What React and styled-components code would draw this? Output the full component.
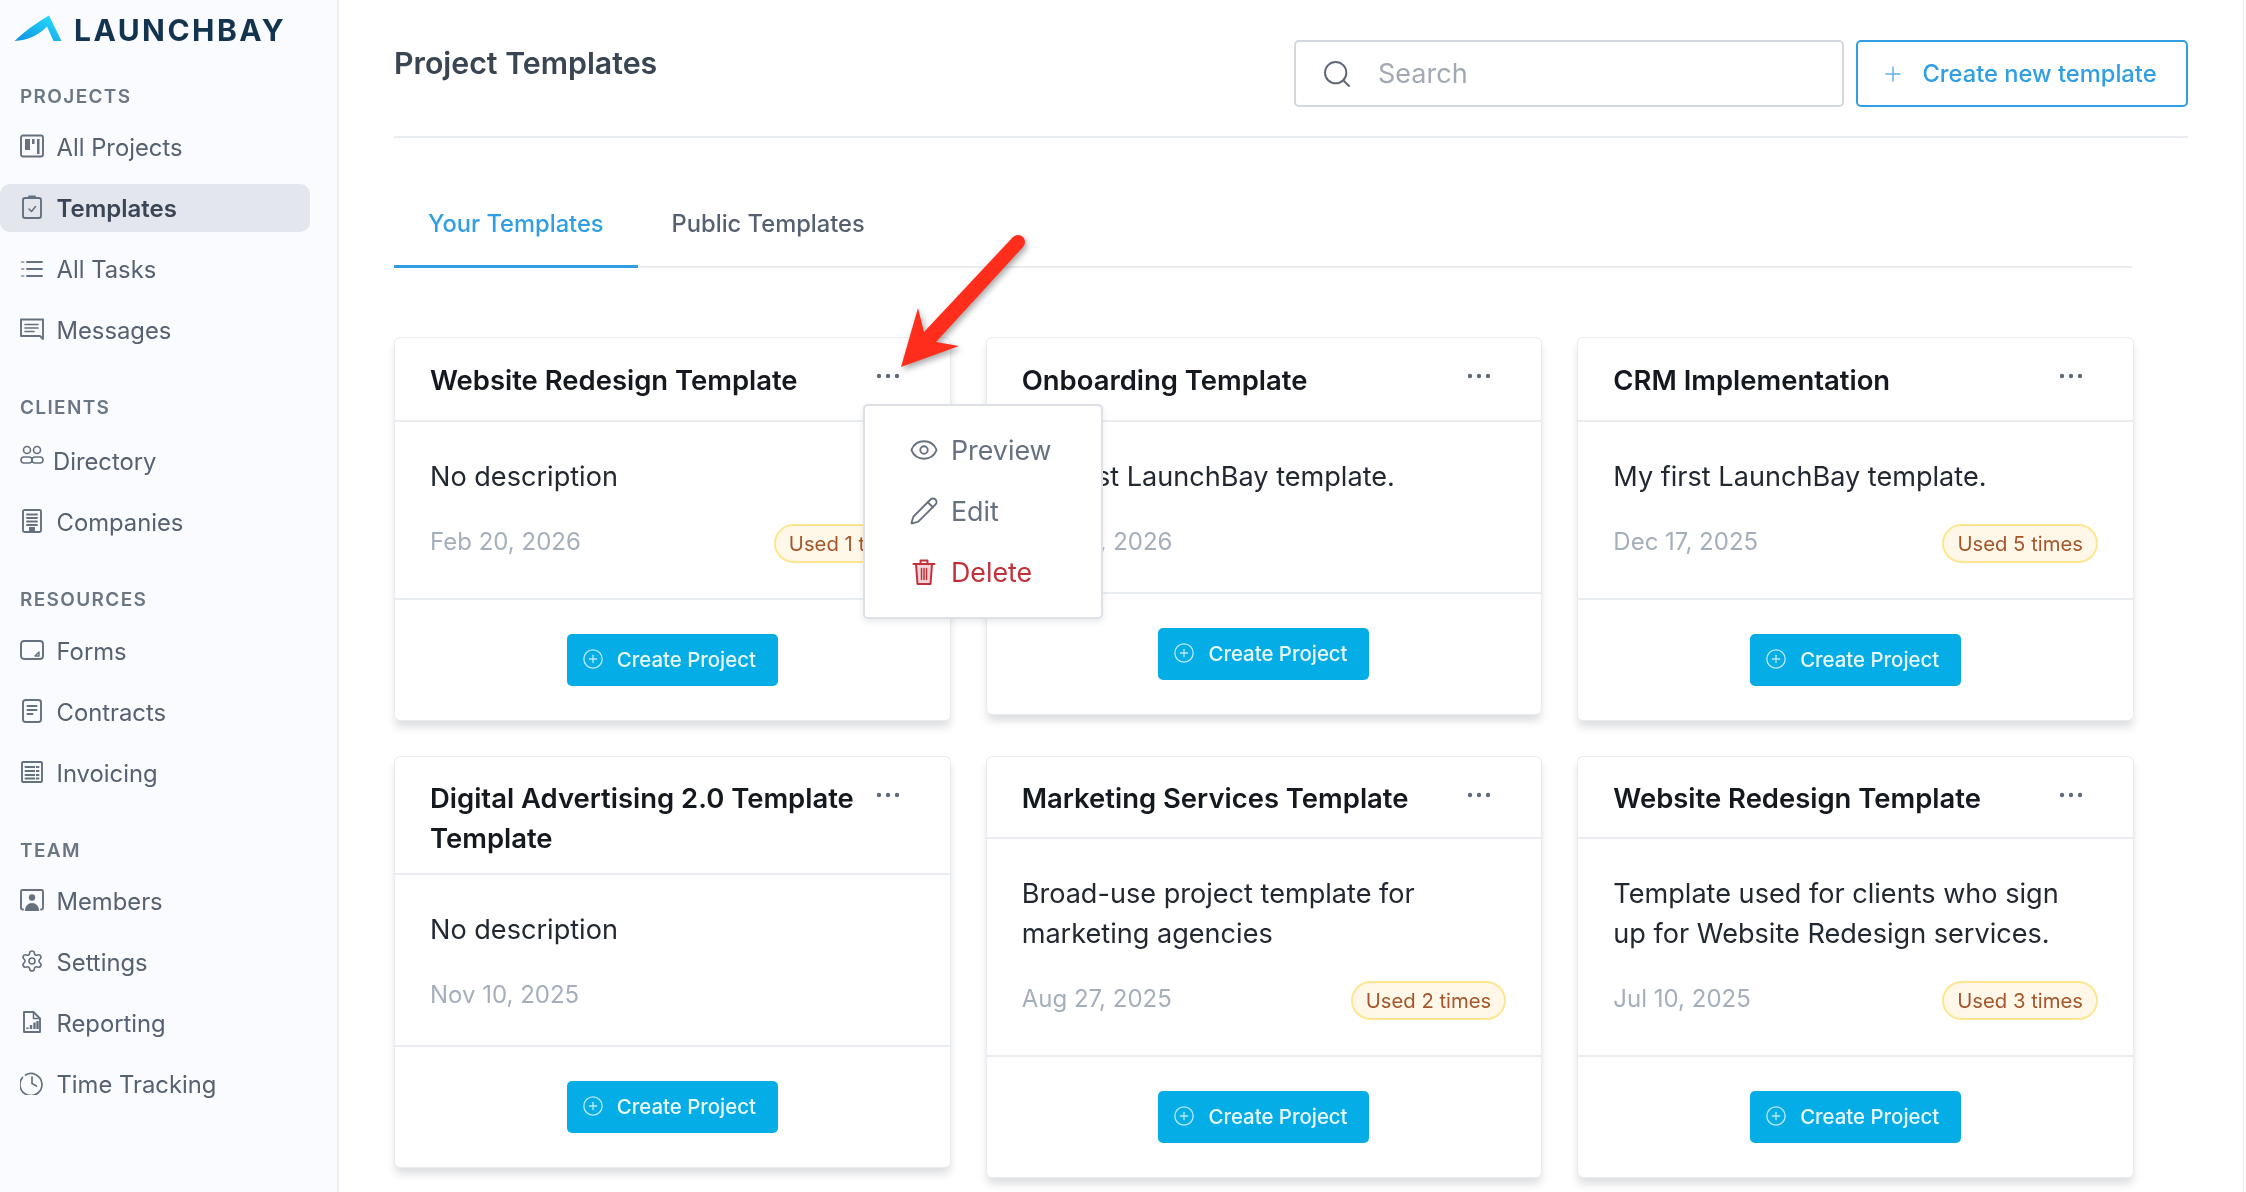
import React from "react";
import styled, { createGlobalStyle } from "styled-components";
import { Eye, Pencil, Search, Plus, CirclePlus, Settings } from "lucide-react";

const Global = createGlobalStyle`
  html, body { margin: 0; padding: 0; background: #fff; }
  body { font-family: Inter, "Liberation Sans", sans-serif; overflow: hidden; }
  * { box-sizing: border-box; }
`;

const Page = styled.div`
  position: relative;
  display: flex;
  width: 2246px;
  height: 1192px;
  overflow: hidden;
`;

const Sidebar = styled.aside`
  flex: 0 0 339px;
  height: 100%;
  background: #fafbfe;
  border-right: 2px solid #eef0f4;
  filter: blur(0.55px);
`;

const LogoRow = styled.div`
  display: flex;
  align-items: flex-start;
  height: 81px;
  padding: 10px 0 0 14px;
  gap: 12px;
`;

const LogoText = styled.span`
  font-size: 30px;
  line-height: 40px;
  font-weight: 700;
  letter-spacing: 2.45px;
  color: #12344f;
`;

const Section = styled.section`
  margin-bottom: 38px;
`;

const SectionLabel = styled.div`
  height: 30px;
  line-height: 32px;
  padding-left: 20px;
  margin-bottom: ${(p) => p.$mb}px;
  font-size: 19px;
  font-weight: 600;
  letter-spacing: 1.35px;
  color: #6b7685;
`;

const NavList = styled.div`
  display: flex;
  flex-direction: column;
  gap: 13px;
`;

const NavItem = styled.div`
  display: flex;
  align-items: center;
  gap: ${(p) => p.$gap || 12.5}px;
  width: 310px;
  height: 48px;
  padding-left: 20px;
  border-radius: 10px;
  font-size: ${(p) => (p.$active ? 24 : 23.8)}px;
  font-weight: ${(p) => (p.$active ? 600 : 400)};
  color: ${(p) => (p.$active ? "#3a4656" : "#566172")};
  background: ${(p) => (p.$active ? "#e3e6ec" : "transparent")};
`;

const NavIcon = styled.svg`
  flex: 0 0 24px;
  width: 24px;
  height: 24px;
  color: #657080;
  margin-top: ${(p) => -(p.$lift ?? 2)}px;
`;

const Main = styled.main`
  flex: 1;
  height: 100%;
  margin-right: 2px;
  padding: 40px 55px 0;
  border-right: 1px solid #e8eaee;
  filter: blur(0.55px);
`;

const TopBar = styled.header`
  display: flex;
  align-items: flex-start;
  height: 98px;
  border-bottom: 2px solid #e9ecf0;
`;

const PageTitle = styled.h1`
  flex: 1;
  margin: 0;
  font-size: 30.3px;
  line-height: 46px;
  font-weight: 600;
  color: #3a4553;
`;

const SearchBox = styled.div`
  display: flex;
  align-items: center;
  gap: 25px;
  width: 550px;
  height: 67px;
  padding-left: 25px;
  border: 2px solid #d3d7de;
  border-radius: 5px;
  font-size: 27px;
  color: #a2a9b4;
  svg { color: #5f6977; flex: none; }
`;

const CreateButton = styled.button`
  display: flex;
  align-items: center;
  gap: 17.5px;
  width: 332px;
  height: 67px;
  margin-left: 12px;
  padding: 0 0 0 23px;
  border: 2px solid #2f9ee3;
  border-radius: 5px;
  background: #fff;
  font: 500 23.7px Inter, sans-serif;
  color: #2f9ee3;
  svg { color: #62b3e8; flex: none; }
`;

const Content = styled.div`
  padding-right: 56px;
`;

const Tabs = styled.nav`
  display: flex;
  margin-top: 52px;
  border-bottom: 2px solid #e9ecf0;
`;

const Tab = styled.div`
  height: 78px;
  padding: 17px 34px 0;
  margin-bottom: -2px;
  font-size: 23.7px;
  line-height: 34px;
  font-weight: 500;
  color: ${(p) => (p.$active ? "#2f9ee3" : "#556070")};
  border-bottom: 3px solid ${(p) => (p.$active ? "#2f9ee3" : "transparent")};
`;

const CardGrid = styled.div`
  display: grid;
  grid-template-columns: repeat(3, 1fr);
  gap: 37px;
  align-items: start;
  margin: 70px -1px 0 1px;
`;

const Card = styled.article`
  position: relative;
  background: #fff;
  border-radius: 5px;
  box-shadow: 0 0 0 1px #e9ebf0, 0 7px 9px rgba(40, 50, 70, 0.16);
`;

const CardHeader = styled.div`
  display: flex;
  align-items: flex-start;
  justify-content: space-between;
  height: ${(p) => p.$height}px;
  padding: ${(p) => p.$pt}px 50px 0 35px;
  border-bottom: 2px solid #e9ecf0;
`;

const CardTitle = styled.h2`
  margin: 0;
  max-width: 430px;
  font-size: 27.45px;
  line-height: 40px;
  font-weight: 600;
  color: #14181f;
`;

const Dots = styled.svg`
  flex: none;
  width: 24px;
  height: 6px;
  margin-top: ${(p) => 35 - p.$pt}px;
  color: #5f6b7a;
`;

const CardBody = styled.div`
  padding: 35px 35px 36px;
`;

const Description = styled.p`
  margin: 0 0 28px;
  max-width: 470px;
  font-size: 27.1px;
  line-height: 40px;
  color: #222831;
`;

const MetaRow = styled.div`
  display: flex;
  align-items: flex-start;
  justify-content: space-between;
`;

const DateText = styled.span`
  font-size: 24px;
  line-height: 33px;
  color: #a5afbc;
`;

const Badge = styled.span`
  height: 39px;
  margin-top: -1px;
  margin-bottom: 1px;
  padding: 0 13px;
  line-height: 36px;
  font-size: 20.3px;
  color: #a5562c;
  background: #fff8e8;
  border: 2px solid #fde68f;
  border-radius: 20px;
`;

const CardFooter = styled.div`
  display: flex;
  justify-content: center;
  padding: 34px 0 34px;
  border-top: 2px solid #e9ecf0;
  margin-top: -2px;
`;

const ProjectButton = styled.button`
  display: flex;
  align-items: center;
  gap: 13px;
  height: 52px;
  width: 211px;
  padding: 0 0 2px 15px;
  border: 0;
  border-radius: 5px;
  background: #05ade6;
  font: 500 20.4px Inter, sans-serif;
  color: #eaf9ff;
  svg { flex: none; opacity: 0.8; }
`;

const Menu = styled.div`
  position: absolute;
  z-index: 5;
  left: 468px;
  top: 66px;
  width: 240px;
  height: 215px;
  padding: 13px 0 0 44px;
  background: #fff;
  border: 2px solid #dde0e6;
  border-radius: 5px;
  box-shadow: 0 3px 6px rgba(40, 50, 70, 0.1);
`;

const MenuItem = styled.div`
  display: flex;
  align-items: center;
  gap: 12px;
  height: 61px;
  font-size: 26.8px;
  color: ${(p) => (p.$danger ? "#c2303a" : "#667180")};
  svg { flex: none; }
`;

const Arrow = styled.svg`
  position: absolute;
  z-index: 10;
  left: 895px;
  top: 230px;
  width: 135px;
  height: 145px;
  overflow: visible;
  filter: drop-shadow(2px 3px 3px rgba(0, 0, 0, 0.35));
`;

const Ic = ({ lift, children }) => (
  <NavIcon $lift={lift} viewBox="0 0 24 24" fill="none" stroke="currentColor" strokeWidth="1.9" strokeLinecap="round" strokeLinejoin="round">
    {children}
  </NavIcon>
);

const icons = {
  projects: (
    <Ic>
      <rect x="1" y="1.5" width="22" height="21" rx="2" />
      <path d="M5 5v11h5V5zM12 5v5h2.5V5zM17 5v15h2.5V5z" fill="currentColor" stroke="none" />
    </Ic>
  ),
  templates: (
    <Ic>
      <rect x="3" y="3" width="18" height="20" rx="2" />
      <rect x="8" y="0.5" width="8" height="3.5" rx="1" fill="currentColor" stroke="none" />
      <path d="M9 14l2.5 2.5L15.5 11.5" strokeWidth="1.5" />
    </Ic>
  ),
  tasks: (
    <Ic lift={0}>
      <path d="M7 5h15M7 12h15M7 19h15" />
      <path d="M2 5h1.5M2 12h1.5M2 19h1.5" strokeWidth="2.2" opacity="0.6" />
    </Ic>
  ),
  messages: (
    <Ic>
      <path d="M1 2.5h22v19.5l-3-3H1z" />
      <path d="M5 7.5h13M5 11h13M5 14.5h9" strokeWidth="1.6" />
    </Ic>
  ),
  directory: (
    <Ic lift={10}>
      <circle cx="7" cy="6" r="3.5" strokeWidth="1.6" />
      <circle cx="17" cy="6" r="3.5" strokeWidth="1.6" />
      <rect x="1" y="13" width="11" height="6" rx="3" strokeWidth="1.6" />
      <rect x="12" y="13" width="11" height="6" rx="3" strokeWidth="1.6" />
    </Ic>
  ),
  companies: (
    <Ic>
      <rect x="3" y="1" width="18" height="22" rx="1.5" />
      <path d="M7 5.5h10M7 9h10M7 12.5h10M7 16h10" strokeWidth="1.8" strokeDasharray="2.5 1.3" />
      <rect x="9" y="18" width="6" height="5" fill="currentColor" stroke="none" />
    </Ic>
  ),
  forms: (
    <Ic lift={3}>
      <rect x="1" y="3" width="22" height="18" rx="3" />
      <path d="M15 18l4-4v4z" strokeWidth="1.4" />
    </Ic>
  ),
  contracts: (
    <Ic>
      <rect x="3" y="1" width="18" height="22" rx="2.5" />
      <path d="M7.5 7h9M7.5 11h9M7.5 15h5" strokeWidth="2" />
    </Ic>
  ),
  invoicing: (
    <Ic>
      <rect x="2" y="2" width="20" height="20" rx="1" />
      <path d="M5.5 7h13M5.5 11h13M5.5 15h13M5.5 18.5h13" strokeWidth="2" />
      <path d="M15.5 6v13" stroke="#fafbfe" strokeWidth="1" />
    </Ic>
  ),
  members: (
    <Ic>
      <path d="M3 21.5H2.5a1.5 1.5 0 0 1-1.5-1.5V3.5A1.5 1.5 0 0 1 2.5 2h19A1.5 1.5 0 0 1 23 3.5V20a1.5 1.5 0 0 1-1.5 1.5H21" />
      <circle cx="12" cy="9.5" r="3.2" fill="currentColor" stroke="none" />
      <path d="M5 23c0-5 3-8 7-8s7 3 7 8z" fill="currentColor" stroke="none" />
    </Ic>
  ),
  reporting: (
    <Ic lift={3}>
      <path d="M13.5 2H4v20h16V8.5z" />
      <path d="M13.5 2v6.5H20" strokeWidth="1.5" />
      <path d="M7.5 19v-1.5M11 19v-4M14.5 19v-6.5M17.5 19v-8" strokeWidth="2.4" strokeLinecap="butt" />
    </Ic>
  ),
  time: (
    <Ic>
      <path d="M5.5 4A11 11 0 1 1 2.500 6.500" strokeWidth="1.7" />
      <path d="M12 6v6.5l4.5 2.5" strokeWidth="1.7" />
    </Ic>
  ),
};

const nav = [
  { label: "PROJECTS", mb: 12, items: [
    { t: "All Projects", i: "projects" },
    { t: "Templates", i: "templates", active: true },
    { t: "All Tasks", i: "tasks" },
    { t: "Messages", i: "messages" },
  ]},
  { label: "CLIENTS", mb: 15, items: [
    { t: "Directory", i: "directory", gap: 9 },
    { t: "Companies", i: "companies" },
  ]},
  { label: "RESOURCES", mb: 13, items: [
    { t: "Forms", i: "forms" },
    { t: "Contracts", i: "contracts" },
    { t: "Invoicing", i: "invoicing" },
  ]},
  { label: "TEAM", mb: 12, items: [
    { t: "Members", i: "members" },
    { t: "Settings", i: "settings" },
    { t: "Reporting", i: "reporting" },
    { t: "Time Tracking", i: "time" },
  ]},
];

const cards = [
  { title: "Website Redesign Template", h: 84, pt: 22, desc: "No description", date: "Feb 20, 2026", badge: "Used 1 time", menu: true },
  { title: "Onboarding Template", h: 84, pt: 22, desc: "My first LaunchBay template.", date: "Feb 20, 2026" },
  { title: "CRM Implementation", h: 84, pt: 22, desc: "My first LaunchBay template.", date: "Dec 17, 2025", badge: "Used 5 times" },
  { title: "Digital Advertising 2.0 Template Template", h: 118, pt: 21, desc: "No description", date: "Nov 10, 2025" },
  { title: "Marketing Services Template", h: 82, pt: 21, desc: "Broad-use project template for marketing agencies", date: "Aug 27, 2025", badge: "Used 2 times" },
  { title: "Website Redesign Template", h: 82, pt: 21, desc: "Template used for clients who sign up for Website Redesign services.", date: "Jul 10, 2025", badge: "Used 3 times" },
];

const TrashIcon = () => (
  <svg width="30" height="30" viewBox="-1.5 0 30 30" fill="none" stroke="#c2303a" strokeWidth="2" strokeLinecap="round" strokeLinejoin="round">
    <path d="M3 7h21M10 7V3.5h7V7" />
    <path d="M5.5 7l1.5 20h13l1.5-20z" fill="#f6d5d8" />
    <path d="M11 11.5v11M13.5 11.5v11M16 11.5v11" strokeWidth="1.5" />
  </svg>
);

const LogoMark = styled.svg`
  flex: none;
  margin-top: 4px;
`;

export default function App() {
  return (
    <Page>
      <Global />
      <Sidebar>
        <LogoRow>
          <LogoMark width="48" height="28" viewBox="0 0 48 28">
            <defs>
              <linearGradient id="lb" x1="0" y1="1" x2="0.75" y2="0.1">
                <stop offset="0" stopColor="#118fe6" />
                <stop offset="1" stopColor="#22d6f7" />
              </linearGradient>
            </defs>
            <path d="M0.5 27Q15 13 35 1.5L47.5 27H39.5L33 12.5Q20 26 0.5 27Z" fill="url(#lb)" />
          </LogoMark>
          <LogoText>LAUNCHBAY</LogoText>
        </LogoRow>
        {nav.map((s) => (
          <Section key={s.label}>
            <SectionLabel $mb={s.mb}>{s.label}</SectionLabel>
            <NavList>
              {s.items.map((it) => (
                <NavItem key={it.t} $active={it.active} $gap={it.gap}>
                  {it.i === "settings" ? (
                    <NavIcon as={Settings} size={24} strokeWidth={1.6} $lift={2} />
                  ) : (
                    icons[it.i]
                  )}
                  {it.t}
                </NavItem>
              ))}
            </NavList>
          </Section>
        ))}
      </Sidebar>
      <Main>
        <TopBar>
          <PageTitle>Project Templates</PageTitle>
          <SearchBox>
            <Search size={32} strokeWidth={1.5} />
            Search
          </SearchBox>
          <CreateButton>
            <Plus size={24} strokeWidth={1.5} />
            Create new template
          </CreateButton>
        </TopBar>
        <Content>
          <Tabs>
            <Tab $active>Your Templates</Tab>
            <Tab>Public Templates</Tab>
          </Tabs>
          <CardGrid>
            {cards.map((c, idx) => (
              <Card key={idx}>
                <CardHeader $height={c.h} $pt={c.pt}>
                  <CardTitle>{c.title}</CardTitle>
                  <Dots $pt={c.pt} viewBox="0 0 24 6" fill="currentColor">
                    <circle cx="3" cy="3" r="2.2" />
                    <circle cx="12" cy="3" r="2.2" />
                    <circle cx="21" cy="3" r="2.2" />
                  </Dots>
                </CardHeader>
                <CardBody>
                  <Description>{c.desc}</Description>
                  <MetaRow>
                    <DateText>{c.date}</DateText>
                    {c.badge && <Badge>{c.badge}</Badge>}
                  </MetaRow>
                </CardBody>
                <CardFooter>
                  <ProjectButton>
                    <CirclePlus size={22} strokeWidth={1.4} />
                    Create Project
                  </ProjectButton>
                </CardFooter>
                {c.menu && (
                  <Menu>
                    <MenuItem>
                      <Eye size={30} strokeWidth={1.5} />
                      Preview
                    </MenuItem>
                    <MenuItem>
                      <Pencil size={30} strokeWidth={1.5} />
                      Edit
                    </MenuItem>
                    <MenuItem $danger>
                      <TrashIcon />
                      Delete
                    </MenuItem>
                  </Menu>
                )}
              </Card>
            ))}
          </CardGrid>
        </Content>
      </Main>
      <Arrow viewBox="0 0 135 145">
        <polygon points="6,137 23,78 29,102 118,7 128,17 41,112 64,116" fill="#ff2d1c" />
        <circle cx="123" cy="12" r="7" fill="#ff2d1c" />
      </Arrow>
    </Page>
  );
}
